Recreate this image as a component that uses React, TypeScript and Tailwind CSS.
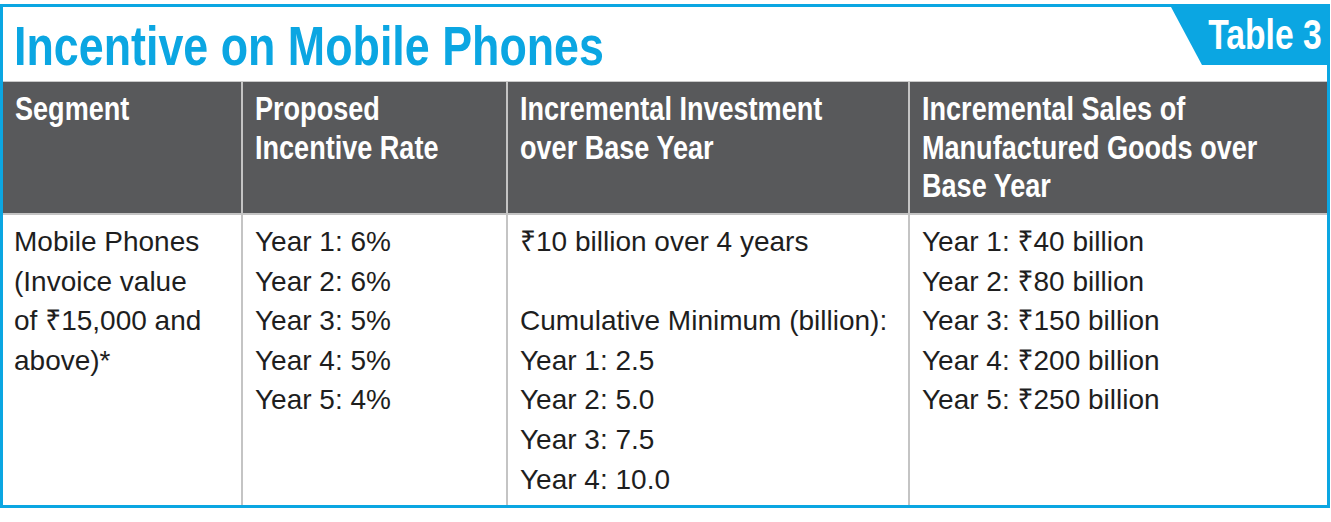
import React from 'react';

// no condensed face installed: Liberation Sans Bold squeezed with scale-x
const bold = 'font-["Liberation_Sans","Noto_Sans","DejaVu_Sans",sans-serif] font-bold';
const body = 'font-["Liberation_Sans","Noto_Sans","DejaVu_Sans",sans-serif]';

const headers: string[][] = [
  ['Segment'],
  ['Proposed', 'Incentive Rate'],
  ['Incremental Investment', 'over Base Year'],
  ['Incremental Sales of', 'Manufactured Goods over', 'Base Year'],
];

const cells: string[][] = [
  ['Mobile Phones', '(Invoice value', 'of ₹15,000 and', 'above)*'],
  ['Year 1: 6%', 'Year 2: 6%', 'Year 3: 5%', 'Year 4: 5%', 'Year 5: 4%'],
  [
    '₹10 billion over 4 years',
    '',
    'Cumulative Minimum (billion):',
    'Year 1: 2.5',
    'Year 2: 5.0',
    'Year 3: 7.5',
    'Year 4: 10.0',
  ],
  [
    'Year 1: ₹40 billion',
    'Year 2: ₹80 billion',
    'Year 3: ₹150 billion',
    'Year 4: ₹200 billion',
    'Year 5: ₹250 billion',
  ],
];

function Lines({ lines }: { lines: string[] }) {
  return (
    <>
      {lines.map((l, i) => (
        <div key={i} className="whitespace-nowrap">
          {l || '\u00a0'}
        </div>
      ))}
    </>
  );
}

export default function App() {
  return (
    <div className="w-[1331px] h-[522px] bg-white pt-[4px]">
      <div className="w-[1330px] h-[504px] border-[3px] border-[#0ba6e2] flex flex-col">
        {/* Title row */}
        <div className="relative h-[75px] border-b border-[#c9c9c9] pl-[11px] pt-[11px]">
          <h1
            className={`${bold} inline-block origin-left scale-x-[0.8] whitespace-nowrap text-[56px] leading-[56px] text-[#0ba6e2]`}
          >
            Incentive on Mobile Phones
          </h1>
          <div className="absolute top-0 right-0 w-[156px] h-[58px] bg-[#0ba6e2] [clip-path:polygon(0_0,100%_0,100%_100%,31px_100%)] flex justify-end pt-[7px] pr-[5px]">
            <span
              className={`${bold} inline-block origin-right scale-x-[0.8] whitespace-nowrap text-[42px] leading-[42px] text-white`}
            >
              Table 3
            </span>
          </div>
        </div>

        {/* Table */}
        <div className="flex-1 grid grid-cols-[238px_263px_400px_minmax(0,1fr)] grid-rows-[131px_1fr] gap-x-[2px] gap-y-[2px] bg-[#c4c4c4]">
          {headers.map((h, i) => (
            <div
              key={`h${i}`}
              className={`bg-[#58595b] overflow-hidden pt-[8px] ${i === 0 ? 'pl-[12px]' : 'pl-[12px]'}`}
            >
              <div className={`${bold} origin-left scale-x-[0.82] text-white text-[33px] leading-[38.5px]`}>
                <Lines lines={h} />
              </div>
            </div>
          ))}
          {cells.map((c, i) => (
            <div
              key={`c${i}`}
              className={`${body} bg-white overflow-hidden text-[#1e1e1e] text-[28px] leading-[39.6px] pt-[7px] ${
                i === 0 ? 'pl-[11px]' : 'pl-[12px]'
              }`}
            >
              <Lines lines={c} />
            </div>
          ))}
        </div>
      </div>
    </div>
  );
}
